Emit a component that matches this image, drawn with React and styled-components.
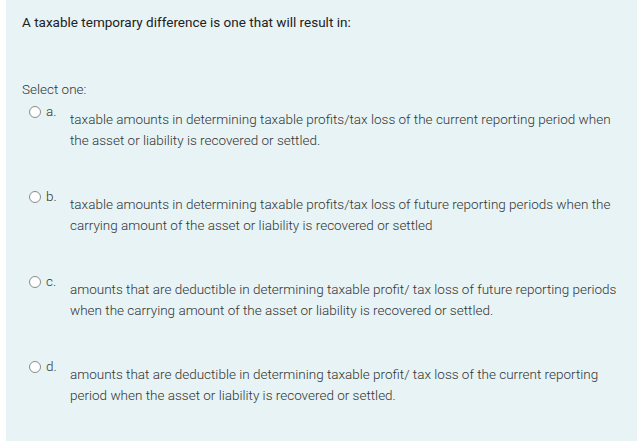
import React from 'react'
import styled, { createGlobalStyle } from 'styled-components'

const GlobalStyle = createGlobalStyle`
  html, body {
    margin: 0;
    padding: 0;
    background: #ffffff;
  }
`

const Panel = styled.div`
  margin-left: 6px;
  height: 441px;
  background: #e7f3f5;
  padding: 14px 0 0 16px;
  box-sizing: border-box;
  font-family: Roboto, "Liberation Sans", sans-serif;
  color: #333;
`

const Question = styled.div`
  font-size: 13.5px;
  line-height: 17px;
  color: #222;
  margin-bottom: 50px;
`

const Prompt = styled.div`
  font-size: 13.5px;
  font-weight: 300;
  line-height: 16px;
  color: #333;
  margin-bottom: 7px;
`

const Answers = styled.div`
  display: flex;
  flex-direction: column;
  gap: 38px;
`

const Option = styled.div`
  display: flex;
  align-items: flex-start;
  padding-left: 7px;
`

const Radio = styled.span`
  width: 10px;
  height: 10px;
  border: 1px solid #8a8a8a;
  border-radius: 50%;
  background: #fff;
  margin-top: 2px;
  flex: none;
`

const Letter = styled.span`
  font-size: 13.5px;
  font-weight: 300;
  line-height: 14px;
  width: 24px;
  padding-left: 5px;
  flex: none;
`

const AnswerText = styled.div`
  font-size: 13.5px;
  font-weight: 300;
  line-height: 21px;
  padding-top: 5px;
  width: 552px;
`

const options = [
  ['a.', 'taxable amounts in determining taxable profits/tax loss of the current reporting period when the asset or liability is recovered or settled.'],
  ['b.', 'taxable amounts in determining taxable profits/tax loss of future reporting periods when the carrying amount of the asset or liability is recovered or settled'],
  ['c.', 'amounts that are deductible in determining taxable profit/ tax loss of future reporting periods when the carrying amount of the asset or liability is recovered or settled.'],
  ['d.', 'amounts that are deductible in determining taxable profit/ tax loss of the current reporting period when the asset or liability is recovered or settled.'],
]

export default function App() {
  return (
    <>
      <GlobalStyle />
      <Panel>
        <Question>A taxable temporary difference is one that will result in:</Question>
        <Prompt>Select one:</Prompt>
        <Answers>
          {options.map(([letter, text]) => (
            <Option key={letter}>
              <Radio />
              <Letter>{letter}</Letter>
              <AnswerText>{text}</AnswerText>
            </Option>
          ))}
        </Answers>
      </Panel>
    </>
  )
}
